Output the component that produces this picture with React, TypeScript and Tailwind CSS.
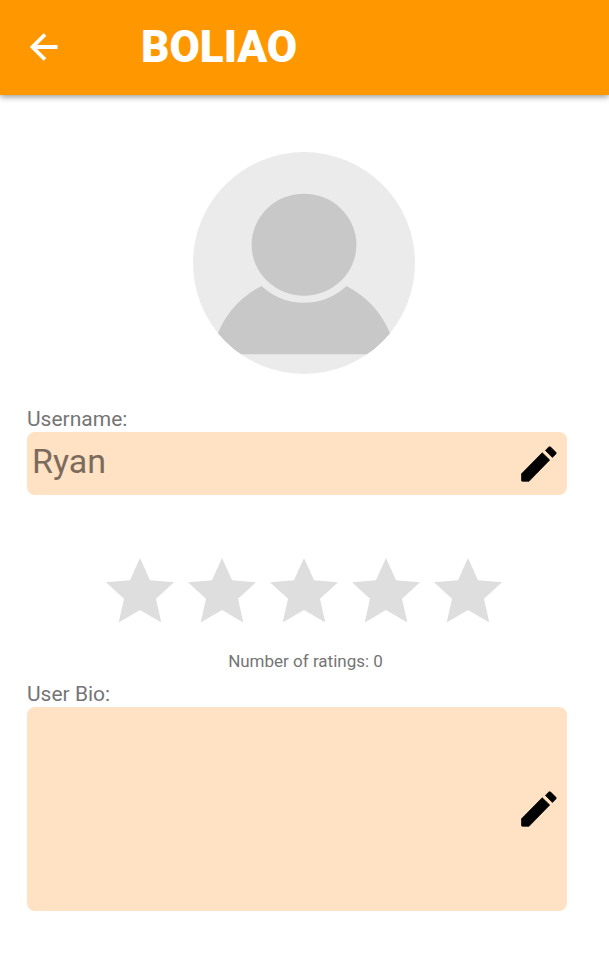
import React, { useState } from "react";

function BackArrow() {
  return (
    <svg viewBox="0 0 28 28" className="h-7 w-7" aria-hidden="true">
      <path d="M15 1.5 2.5 14 15 26.5M2.5 14H27.5" fill="none" stroke="#fff" strokeWidth="3.8" />
    </svg>
  );
}

function Pencil() {
  return (
    <svg viewBox="0 0 36 36" className="h-9 w-9" aria-hidden="true">
      <g fill="#000" stroke="#000" strokeWidth="0.7" strokeLinejoin="round">
        <path d="M.5 27.800 21.2 6.700 28.700 14 8 35.3H1.4Q.5 35.3 .5 34.5Z" />
        <path d="M24.400 4.400 27.800 1Q28.700.3 29.6 1L34.9 6.3Q35.6 7 34.9 7.900L31.400 11.500Z" />
      </g>
    </svg>
  );
}

function Star() {
  return (
    <svg viewBox="0 0 68 65" className="h-[65px] w-[68px]" aria-hidden="true">
      <path
        d="M34 0 44 22.3 68 24.3 50 40.7 55.3 64.5 34 52 12.7 64.5 18 40.7 0 24.3 24 22.3Z"
        fill="#dedede"
      />
    </svg>
  );
}

function Avatar() {
  return (
    <svg viewBox="0 0 222 222" className="h-[222px] w-[222px]" role="img" aria-label="Profile picture">
      <defs>
        <clipPath id="avatar-circle">
          <circle cx="111" cy="111" r="111" />
        </clipPath>
      </defs>
      <g clipPath="url(#avatar-circle)">
        <rect width="222" height="222" fill="#ebebeb" />
        <ellipse cx="111" cy="92.7" rx="52.4" ry="51" fill="#c8c8c8" />
        <path
          d="M68.5 134A62 62 0 0 0 153.5 134Q184 150 197 181L204 202.3H18L25 181Q38 150 68.5 134Z"
          fill="#c8c8c8"
        />
      </g>
    </svg>
  );
}

export default function App() {
  const [name, setName] = useState("Ryan");
  const [bio, setBio] = useState("");

  return (
    <div className="min-h-screen bg-white font-['Roboto',sans-serif] text-[#757575]">
      <header className="flex h-[95px] items-center bg-[#ff9800] pb-0.5 pl-[30px] shadow-[0_2px_6px_rgba(0,0,0,0.4)]">
        <button type="button" aria-label="Back">
          <BackArrow />
        </button>
        <h1 className="pl-[83px] text-[44px] leading-[48px] font-black text-white">BOLIAO</h1>
      </header>

      <main className="pt-[57px] pb-14">
        <div className="flex justify-center pr-0.5">
          <Avatar />
        </div>

        <section className="mt-[33px] pr-[42px] pl-[27px]">
          <label htmlFor="username" className="block text-[21px] leading-[25px]">
            Username:
          </label>
          <div className="flex h-[63px] items-center rounded-lg bg-[#ffe1c3] pr-2.5 pl-[5px]">
            <input
              id="username"
              value={name}
              onChange={(e) => setName(e.target.value)}
              className="h-full min-w-0 flex-1 bg-transparent pb-1.5 text-[34px] text-[#7b6b5d] outline-none"
            />
            <button type="button" aria-label="Edit username">
              <Pencil />
            </button>
          </div>
        </section>

        <div className="mt-[63px] flex justify-center gap-3.5 pr-0.5" role="img" aria-label="0 out of 5 stars">
          <Star />
          <Star />
          <Star />
          <Star />
          <Star />
        </div>
        <p className="mt-[26px] pl-0.5 text-center text-[17px] leading-[25px]">Number of ratings: 0</p>

        <section className="mt-2 pr-[42px] pl-[27px]">
          <label htmlFor="bio" className="block text-[21px] leading-[25px]">
            User Bio:
          </label>
          <div className="flex h-[204px] items-center rounded-lg bg-[#ffe1c3] pr-2.5 pl-[5px]">
            <textarea
              id="bio"
              value={bio}
              onChange={(e) => setBio(e.target.value)}
              className="h-full min-w-0 flex-1 resize-none bg-transparent py-2 text-[21px] text-[#7b6b5d] outline-none"
            />
            <button type="button" aria-label="Edit bio">
              <Pencil />
            </button>
          </div>
        </section>
      </main>
    </div>
  );
}
